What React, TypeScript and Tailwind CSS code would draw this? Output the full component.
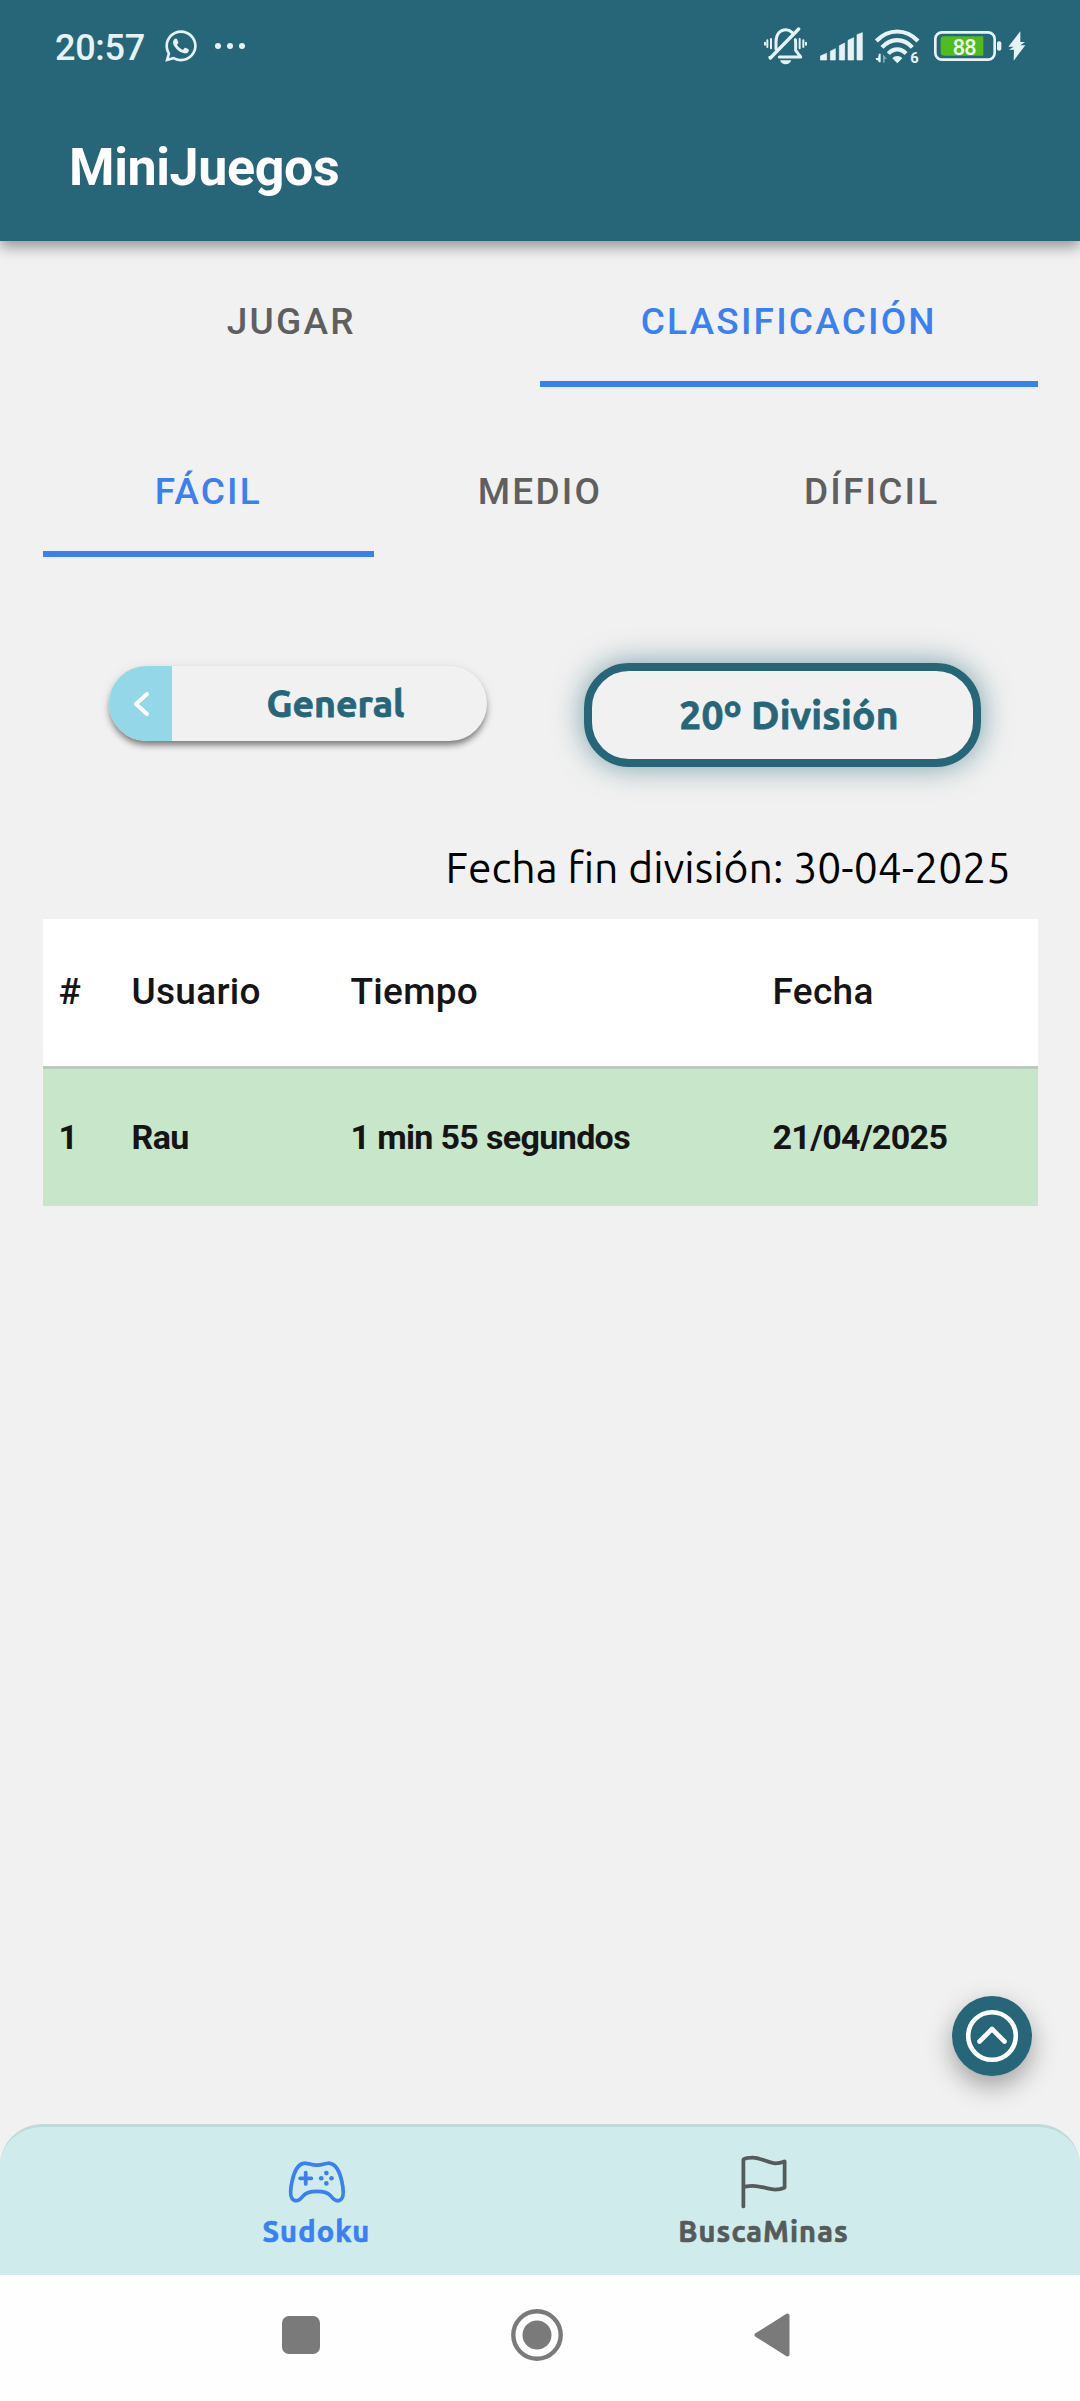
import { useState } from 'react';
import { FaWhatsapp } from 'react-icons/fa';
import { IoFlagOutline, IoGameControllerOutline } from 'react-icons/io5';
import clsx from 'clsx';

interface Resultado {
  puesto: number;
  usuario: string;
  tiempo: string;
  fecha: string;
}

interface SegmentProps {
  items: string[];
  value: string;
  onChange: (value: string) => void;
}

const resultados: Resultado[] = [
  { puesto: 1, usuario: 'Rau', tiempo: '1 min 55 segundos', fecha: '21/04/2025' },
];

const MutedBellIcon = () => (
  <svg className="h-[38px] w-[43px]" viewBox="0 0 129 114" fill="none" stroke="#e6f3f6" strokeWidth="9" strokeLinecap="round" strokeLinejoin="round">
    <path d="M36 66V44c0-22 12-36 29-36 8 0 14 3 19 8" />
    <path d="M94 38c1 4 1 8 1 12v20l15 20H46" />
    <path d="M104 6 19 93" strokeWidth="10" />
    <path d="M16 90h8M21 36v28M10 40v20M3 47v6M107 36v28M118 40v20M126 47v6" strokeWidth="6" />
    <path d="M48 100h34c-3 8-9 12-17 12s-14-4-17-12z" fill="#e6f3f6" stroke="none" />
  </svg>
);

const SignalIcon = () => (
  <svg className="h-[29px] w-[43px]" viewBox="0 0 129 87" fill="#e6f3f6" stroke="#e6f3f6" strokeWidth="2" strokeLinejoin="round">
    <path d="M1 84V72l19-8v20zM31 84V58l15-8v34zM58 84V41l16-8v51zM84 84V25l17-8v67zM111 84V8l16-6v82z" />
  </svg>
);

const WifiIcon = () => (
  <svg className="h-[35px] w-[45px] overflow-visible" viewBox="0 0 135 105" fill="none" stroke="#e6f3f6" strokeWidth="12.5">
    <path d="M4 36C40-2 93-2 129 36" />
    <path d="M21 55c26-29 65-29 91 0" />
    <path d="M40 74c15-17 38-17 53 0" />
    <path d="m52 88 15 15 15-15c-8-9-22-9-30 0z" fill="#e6f3f6" stroke="none" />
    <path d="M13 76v23L1 87h8" fill="#e6f3f6" stroke="none" />
    <path d="M14 74v26M3 90h9" strokeWidth="6" />
    <path d="M24 101V76l12 14h-7v11z" fill="#7fa6b1" stroke="none" />
    <text x="106" y="101" fill="#e6f3f6" stroke="none" fontFamily="Roboto" fontWeight="700" fontSize="44">6</text>
  </svg>
);

const BatteryIcon = () => (
  <svg className="h-[30px] w-[68px] overflow-visible" viewBox="0 0 204 90">
    <rect x="4" y="4" width="178" height="82" rx="20" fill="none" stroke="#e6f3f6" strokeWidth="8" />
    <path d="M30 16h118v58H30a10 10 0 0 1-10-10V26a10 10 0 0 1 10-10z" fill="#51bb1f" />
    <rect x="189" y="31" width="13" height="28" rx="6" fill="#e6f3f6" />
    <text x="56" y="72" fill="#eef8ea" fontFamily="Roboto" fontWeight="500" fontSize="65" textLength="72">88</text>
  </svg>
);

const BoltIcon = () => (
  <svg className="h-[30px] w-[18px]" viewBox="0 0 54 90" fill="#e6f3f6">
    <path d="M37 1 1 47h16L3 56h15L17 89l35-46H37l14-10H37z" />
  </svg>
);

const StatusBar = () => (
  <div className="flex h-[92px] items-center pl-[55px] pr-[54px] text-[#e6f3f6]">
    <span className="mt-[3px] text-[36px] font-medium leading-none tracking-[-0.3px]">20:57</span>
    <FaWhatsapp className="ml-[18px] h-9 w-9" />
    <div className="ml-[16px] flex gap-[6px]">
      <i className="h-[6px] w-[6px] rounded-full bg-[#e6f3f6]" />
      <i className="h-[6px] w-[6px] rounded-full bg-[#e6f3f6]" />
      <i className="h-[6px] w-[6px] rounded-full bg-[#e6f3f6]" />
    </div>
    <div className="ml-auto flex items-center">
      <MutedBellIcon />
      <span className="ml-[13px]"><SignalIcon /></span>
      <span className="ml-[12px]"><WifiIcon /></span>
      <span className="ml-[14px]"><BatteryIcon /></span>
      <span className="ml-[6px]"><BoltIcon /></span>
    </div>
  </div>
);

const Segment = ({ items, value, onChange }: SegmentProps) => (
  <div className="flex h-[127px]">
    {items.map((item) => (
      <button
        key={item}
        onClick={() => onChange(item)}
        className={clsx(
          'flex flex-1 items-center justify-center border-b-[6px] pt-[3px] text-[37px] font-medium uppercase tracking-[2.2px]',
          item === value ? 'border-[#3b80f1] text-[#3b80f1]' : 'border-transparent text-[#5f5f5f]'
        )}
      >
        {item}
      </button>
    ))}
  </div>
);

const columnas = 'grid grid-cols-[73px_219px_422px_1fr] items-center pb-[1px] pl-[16px]';

export default function App() {
  const [seccion, setSeccion] = useState('Clasificación');
  const [dificultad, setDificultad] = useState('Fácil');

  return (
    <div className="relative flex h-[2401px] w-[1080px] flex-col overflow-hidden bg-[#f1f1f1] font-['Roboto',sans-serif]">
      <header className="h-[241px] shrink-0 bg-[#276678] shadow-[0_6px_13px_rgba(0,0,0,0.38)]">
        <StatusBar />
        <h1 className="pl-[69px] pt-[44px] text-[52px] font-bold leading-[64px] tracking-[-0.4px] text-white">
          MiniJuegos
        </h1>
      </header>

      <main className="flex flex-1 flex-col px-[42.5px] pt-[19px]">
        <Segment items={['Jugar', 'Clasificación']} value={seccion} onChange={setSeccion} />
        <div className="h-[43px]" />
        <Segment items={['Fácil', 'Medio', 'Díficil']} value={dificultad} onChange={setDificultad} />

        <div className="flex items-start justify-between pl-[66.5px] pr-[56.5px] pt-[106px] font-['Ubuntu','Noto_Sans',sans-serif] font-bold text-[#276678] [-webkit-text-stroke:0.8px_currentColor]">
          <button className="mt-[3px] flex h-[75px] w-[378px] overflow-hidden rounded-full text-[37.5px] shadow-[0_5px_6px_-1px_rgba(0,0,0,0.45),0_2px_12px_rgba(0,0,0,0.1)]">
            <span className="flex h-full w-[63px] items-center justify-center bg-[#93d7e8]">
              <svg className="h-[26px] w-[18px]" viewBox="0 0 18 26" fill="none" stroke="#fff" strokeWidth="4" strokeLinecap="round" strokeLinejoin="round">
                <path d="M15 3 4 13l11 10" />
              </svg>
            </span>
            <span className="flex h-full flex-1 items-center justify-center pl-[12px]">General</span>
          </button>
          <button className="flex h-[104px] w-[397px] items-center justify-center rounded-[45px] border-[8px] border-[#276678] pl-[13px] text-[39px] tracking-[0.2px] shadow-[0_0_30px_rgba(39,102,120,0.6)]">
            20º División
          </button>
        </div>

        <p className="mt-[67px] h-[85px] pr-[27px] pt-[1px] text-right font-['Ubuntu','Noto_Sans',sans-serif] text-[42.7px] leading-[64px] text-black">
          Fecha fin división: 30-04-2025
        </p>

        <section className="text-[#151515]">
          <div className={clsx(columnas, 'h-[150px] border-b-[3px] border-[#bccabd] bg-white text-[37px] font-medium tracking-[0.3px]')}>
            <span>#</span>
            <span>Usuario</span>
            <span>Tiempo</span>
            <span>Fecha</span>
          </div>
          {resultados.map((resultado) => (
            <div key={resultado.puesto} className={clsx(columnas, 'h-[137px] bg-[#c8e6c9] text-[34px] font-bold tracking-[-0.65px]')}>
              <span>{resultado.puesto}</span>
              <span>{resultado.usuario}</span>
              <span>{resultado.tiempo}</span>
              <span>{resultado.fecha}</span>
            </div>
          ))}
        </section>
      </main>

      <button
        aria-label="Subir"
        className="absolute left-[952px] top-[1996px] flex h-[80px] w-[80px] items-center justify-center rounded-full bg-[#276678] shadow-[0_10px_26px_rgba(0,0,0,0.34)]"
      >
        <svg className="h-[54px] w-[54px]" viewBox="0 0 54 54" fill="none" stroke="#fff" strokeWidth="4.6" strokeLinecap="round" strokeLinejoin="round">
          <circle cx="27" cy="27" r="23.8" />
          <path d="m14.5 32.5 12.5-12.5 12.5 12.5" />
        </svg>
      </button>

      <nav className="flex h-[151px] shrink-0 rounded-t-[42px] border-t-[3px] border-[#c0d9d9] bg-[#d0ebeb] font-['Ubuntu','Noto_Sans',sans-serif] text-[29px] font-bold leading-[36px] tracking-[1.1px] [-webkit-text-stroke:0.7px_currentColor]">
        <button className="ml-[93px] flex w-[447px] flex-col items-center pt-[25px] text-[#3b80f1]">
          <IoGameControllerOutline className="mb-[1px] h-[60px] w-[60px]" />
          Sudoku
        </button>
        <button className="flex w-[447px] flex-col items-center pt-[25px] text-[#555b5b]">
          <IoFlagOutline className="mb-[1px] h-[60px] w-[60px]" />
          BuscaMinas
        </button>
      </nav>

      <footer className="flex h-[126px] shrink-0 items-start bg-[#fefefe] pl-[282px] pt-[34px] text-[#7a7a7a]">
        <i className="mt-[7px] h-[38px] w-[38px] rounded-[7px] bg-[#7a7a7a]" />
        <svg className="ml-[191px] h-[52px] w-[52px]" viewBox="0 0 52 52">
          <circle cx="26" cy="26" r="23.7" fill="none" stroke="currentColor" strokeWidth="4.4" />
          <circle cx="26" cy="26" r="14.5" fill="currentColor" />
        </svg>
        <svg className="ml-[191px] mt-[4px] h-[44px] w-[36px]" viewBox="0 0 36 44" fill="currentColor" stroke="currentColor" strokeWidth="4" strokeLinejoin="round">
          <path d="M33.5 2.5v39L2.5 22z" />
        </svg>
      </footer>
    </div>
  );
}
